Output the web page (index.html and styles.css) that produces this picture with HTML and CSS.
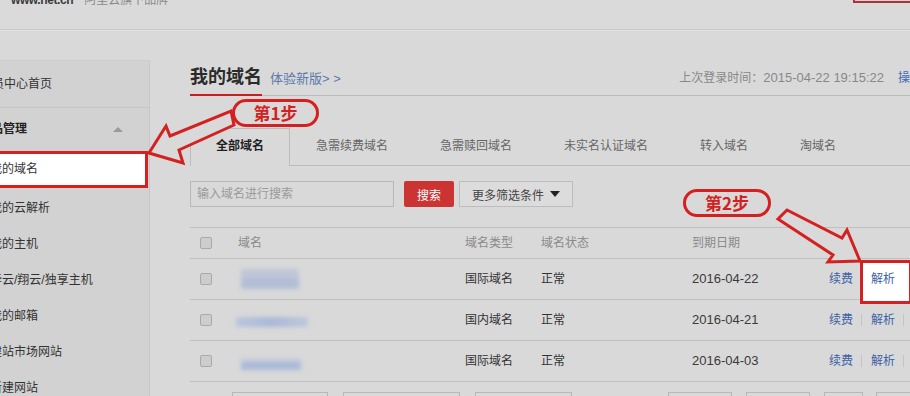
FILE: index.html
```html
<!DOCTYPE html>
<html lang="zh-CN">
<head>
<meta charset="utf-8">
<title>我的域名</title>
<link rel="stylesheet" href="styles.css">
</head>
<body>
<div class="page">
  <header class="top">
    <div class="brand">
      <span class="logo">www.net.cn</span>
      <span class="slogan">阿里云旗下品牌</span>
    </div>
    <span class="top-btn"></span>
  </header>

  <div class="layout">
    <aside class="side">
      <div class="side-home"><span class="t t-home">会员中心首页</span></div>
      <div class="side-group"><span class="t t-grp">产品管理</span><span class="caret-up"></span></div>
      <ul class="side-list">
        <li class="active"><span class="t">我的域名</span></li>
        <li><span class="t">我的云解析</span></li>
        <li><span class="t">我的主机</span></li>
        <li><span class="t">华云/翔云/独享主机</span></li>
        <li><span class="t">我的邮箱</span></li>
        <li><span class="t">建站市场网站</span></li>
        <li><span class="t">新建网站</span></li>
      </ul>
    </aside>

    <main class="main">
      <div class="title-row">
        <h1>我的域名</h1>
        <a class="new">体验新版&gt; &gt;</a>
        <span class="last">上次登录时间：<span class="num">2015-04-22 19:15:22</span></span>
        <a class="oplog">操作记录</a>
      </div>

      <nav class="tabs">
        <span class="tab active">全部域名</span>
        <span class="tab">急需续费域名</span>
        <span class="tab">急需赎回域名</span>
        <span class="tab">未实名认证域名</span>
        <span class="tab">转入域名</span>
        <span class="tab">淘域名</span>
      </nav>

      <div class="search">
        <input class="search-input" type="text" placeholder="输入域名进行搜索">
        <button class="btn-search">搜索</button>
        <button class="btn-more">更多筛选条件<span class="caret-down"></span></button>
      </div>

      <div class="table">
        <div class="row head">
          <span class="c1"><span class="cb"></span></span>
          <span>域名</span>
          <span>域名类型</span>
          <span>域名状态</span>
          <span>到期日期</span>
          <span></span>
        </div>
        <div class="row">
          <span class="c1"><span class="cb"></span></span>
          <span><span class="blur b1"></span></span>
          <span>国际域名</span>
          <span>正常</span>
          <span class="date">2016-04-22</span>
          <span class="ops"><a>续费</a><span class="sep"></span><a class="hl">解析</a></span>
        </div>
        <div class="row">
          <span class="c1"><span class="cb"></span></span>
          <span><span class="blur b2"></span></span>
          <span>国内域名</span>
          <span>正常</span>
          <span class="date">2016-04-21</span>
          <span class="ops"><a>续费</a><span class="sep"></span><a>解析</a><span class="sep"></span><a>管理</a></span>
        </div>
        <div class="row">
          <span class="c1"><span class="cb"></span></span>
          <span><span class="blur b3"></span></span>
          <span>国际域名</span>
          <span>正常</span>
          <span class="date">2016-04-03</span>
          <span class="ops"><a>续费</a><span class="sep"></span><a>解析</a><span class="sep"></span><a>管理</a></span>
        </div>
      </div>

      <div class="pager">
        <span class="pg w97"></span>
        <span class="pg w119"></span>
        <span class="pg w99"></span>
        <span class="pg w65 gap"></span>
        <span class="pg w65"></span>
        <span class="pg w39"></span>
        <span class="pg w60"></span>
      </div>
    </main>
  </div>

  <svg class="anno" width="910" height="396" viewBox="0 0 910 396">
    <polygon points="149,153 166,126 170,136 231,111 234,125 179,150 183,163" />
    <polygon points="787,210 842,238 847,230 860,261 828,262 833,255 778,219" />
  </svg>
  <div class="pill pill1">第1步</div>
  <div class="pill pill2">第2步</div>
</div>
</body>
</html>
```

FILE: styles.css
```css
* { box-sizing: border-box; }

body {
  margin: 0;
  width: 910px;
  height: 396px;
  overflow: hidden;
  background: #d9d9d9;
  font: 12px/1.4 "Liberation Sans", "Noto Sans CJK SC", sans-serif;
  color: #333;
}

a { text-decoration: none; cursor: pointer; }

.page {
  position: relative;
  width: 960px;
}

/* header */
.top {
  height: 30px;
  display: flex;
  justify-content: space-between;
  align-items: flex-start;
  padding-left: 11px;
  border-bottom: 1px solid #cbcbcb;
  box-shadow: 0 1px 0 #e1e1e1;
  background: #dadada;
}
.brand { display: flex; align-items: flex-start; margin-top: -6px; }
.logo {
  font-weight: bold;
  font-size: 12px;
  line-height: 12px;
  letter-spacing: -0.4px;
  color: #3a3a3a;
}
.slogan {
  margin-left: 11px;
  line-height: 12px;
  color: #8a8a8a;
}
.top-btn {
  width: 107px;
  height: 31px;
  margin-top: -28px;
  border: 2px solid #b3303b;
}

/* layout */
.layout {
  display: flex;
  align-items: flex-start;
  margin-top: 30px;
}

.side {
  width: 150px;
  height: 340px;
  background: #d2d2d2;
  border-right: 1px solid #c7c7c7;
  border-top: 1px solid #cdcdcd;
  flex: none;
}
.t { margin-left: -10px; }
.side-home {
  height: 47px;
  line-height: 46px;
  border-bottom: 1px solid #c6c6c6;
  color: #333;
}
.t-home { margin-left: -20px; }
.side-group {
  height: 42px;
  display: flex;
  align-items: center;
  color: #222;
  font-weight: bold;
}
.t-grp { margin-left: -21px; }
.caret-up {
  margin-left: auto;
  margin-right: 26px;
  width: 0;
  height: 0;
  border-left: 5px solid transparent;
  border-right: 5px solid transparent;
  border-bottom: 5px solid #9a9a9a;
}
.side-list {
  list-style: none;
  margin: 1px 0 0;
  padding: 0;
}
.side-list li {
  height: 36px;
  line-height: 36px;
  color: #333;
}
.side-list li.active {
  height: 37px;
  line-height: 31px;
  width: 152px;
  margin-left: -4px;
  margin-bottom: 2px;
  background: #fff;
  border: 3px solid #d42020;
}
.side-list li.active .t { margin-left: -9px; }

/* main */
.main {
  margin-left: 40px;
  width: 760px;
  flex: none;
}

.title-row {
  display: flex;
  align-items: flex-end;
  padding-top: 4px;
  border-bottom: 1px solid #bcbcbc;
}
.title-row h1 {
  margin: 0 0 -1px;
  font-size: 18px;
  line-height: 26px;
  font-weight: bold;
  color: #2b2b2b;
  padding-bottom: 4px;
  border-bottom: 2px solid #c81e1e;
}
.new {
  margin: 0 0 8px 8px;
  font-size: 13px;
  line-height: 16px;
  color: #5b79ad;
}
.last {
  margin: 0 0 9px auto;
  line-height: 16px;
  color: #888;
}
.num { font-size: 13px; }
.oplog {
  margin: 0 4px 9px 14px;
  line-height: 16px;
  color: #3d6db5;
}

/* tabs */
.tabs {
  display: flex;
  margin-top: 32px;
  border-bottom: 1px solid #bcbcbc;
}
.tab {
  padding: 0 25px 2px;
  line-height: 35px;
  border: 1px solid transparent;
  border-bottom: 0;
  margin-bottom: -1px;
  color: #666;
}
.tab.active {
  border-color: #bcbcbc;
  background: #d9d9d9;
  color: #1f1f1f;
  font-weight: bold;
}

/* search */
.search {
  display: flex;
  margin-top: 15px;
  height: 26px;
}
.search-input {
  width: 204px;
  height: 26px;
  margin: 0;
  padding: 0 6px;
  border: 1px solid #b8b8b8;
  background: transparent;
  font: 12px "Liberation Sans", "Noto Sans CJK SC", sans-serif;
  outline: none;
}
.search-input::placeholder { color: #9a9a9a; }
.btn-search {
  margin-left: 10px;
  width: 50px;
  height: 26px;
  border: 0;
  border-radius: 2px;
  background: #cc3333;
  color: #fff;
  font: 12px "Liberation Sans", "Noto Sans CJK SC", sans-serif;
  padding: 0;
}
.btn-more {
  margin-left: 5px;
  width: 114px;
  height: 26px;
  border: 1px solid #bdbdbd;
  background: #dcdcdc;
  color: #444;
  font: 12px "Liberation Sans", "Noto Sans CJK SC", sans-serif;
  padding: 0 0 0 12px;
  display: flex;
  align-items: center;
}
.caret-down {
  margin-left: 6px;
  width: 0;
  height: 0;
  border-left: 5px solid transparent;
  border-right: 5px solid transparent;
  border-top: 6px solid #222;
}

/* table */
.table {
  margin-top: 20px;
  border-top: 1px solid #bfbfbf;
}
.row {
  display: grid;
  grid-template-columns: 48px 227px 76px 151px 137px 1fr;
  align-items: center;
  height: 41px;
  border-bottom: 1px solid #bfbfbf;
  color: #333;
}
.row.head {
  height: 31px;
  color: #8a8a8a;
}
.c1 { display: flex; align-items: center; }
.cb {
  margin-left: 10px;
  width: 12px;
  height: 12px;
  border: 1px solid #a9a9a9;
  border-radius: 2px;
  background: #cdcdcd;
}
.date { font-size: 13px; color: #3a3a3a; }
.blur {
  display: block;
  filter: blur(2px);
  opacity: 0.8;
}
.b1 {
  width: 58px; height: 20px; margin-left: 3px;
  background: linear-gradient(#b9c2d6 0 45%, #a9b8d6 45% 100%);
}
.b2 {
  width: 72px; height: 10px; margin-left: -2px; margin-top: 4px;
  background: linear-gradient(90deg, #b3c0dc, #9fb1d8 50%, #b7c3dc);
}
.b3 {
  width: 60px; height: 12px; margin-left: 3px; margin-top: 6px;
  background: linear-gradient(#c4cad8 0 30%, #9fb2d9 30% 100%);
}
.ops { display: flex; align-items: center; }
.ops a {
  color: #3d62a8;
  line-height: 18px;
}
.sep {
  width: 1px;
  height: 12px;
  margin: 0 9px 0 8px;
  background: #c4c4c4;
}
.hl {
  position: relative;
  z-index: 0;
}
.hl::before {
  content: "";
  position: absolute;
  left: -11px;
  top: -10px;
  width: 46px;
  height: 38px;
  background: #fff;
  border: 3px solid #d42020;
  z-index: -1;
}

/* pager */
.pager {
  display: flex;
  margin-top: 10px;
  padding-left: 42px;
}
.pg {
  height: 24px;
  border: 1px solid #b8b8b8;
  margin-right: 15px;
}
.w97 { width: 97px; }
.w119 { width: 119px; }
.w99 { width: 99px; margin-right: 96px; }
.w65 { width: 65px; margin-right: 14px; }
.w39 { width: 39px; margin-right: 13px; }
.w60 { width: 60px; }

/* annotations */
.anno {
  position: absolute;
  left: 0;
  top: 0;
  overflow: visible;
  pointer-events: none;
}
.anno polygon {
  fill: #d9d9d9;
  stroke: #d42020;
  stroke-width: 3;
  stroke-linejoin: miter;
}
.pill {
  position: absolute;
  height: 28px;
  border: 3px solid #d42020;
  border-radius: 14px;
  color: #d42020;
  font: bold 17px/22px "Noto Sans CJK SC", sans-serif;
  text-align: center;
  background: #d9d9d9;
}
.pill1 { left: 232px; top: 99px; width: 87px; }
.pill2 { left: 683px; top: 189px; width: 88px; }
```
